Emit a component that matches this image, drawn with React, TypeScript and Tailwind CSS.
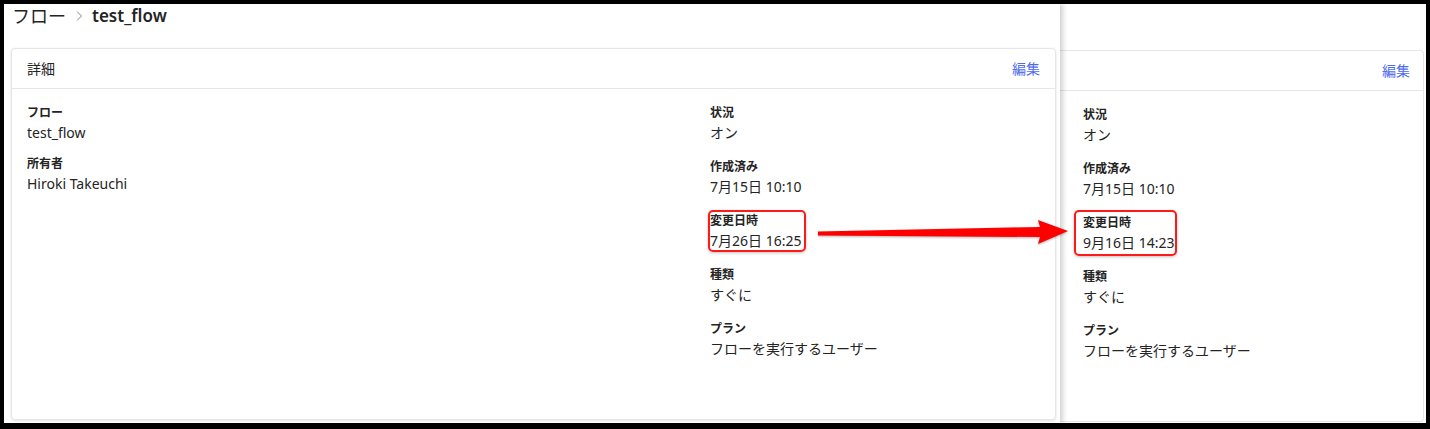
const font = "font-['Noto_Sans','Noto_Sans_CJK_JP',sans-serif]";

type Item = { label: string; value: string; mark?: boolean };

const leftItems: Item[] = [
  { label: 'フロー', value: 'test_flow' },
  { label: '所有者', value: 'Hiroki Takeuchi' },
];

function Field({ item, wide }: { item: Item; wide?: boolean }) {
  return (
    <div className="relative">
      {item.mark && (
        <div
          className={`absolute rounded-[5px] border-2 border-[#ff1a1a] shadow-[0_1px_3px_rgba(0,0,0,0.25)] ${
            wide ? '-left-[9px] -top-[4px] w-[103px] h-[46px]' : '-left-[2px] -top-[2px] w-[98px] h-[42px]'
          }`}
        />
      )}
      <div className="text-[12px] leading-[18px] font-semibold text-[#242424]">{item.label}</div>
      <div className="text-[14px] leading-[21px] text-[#242424]">{item.value}</div>
    </div>
  );
}

function rightItems(changed: string): Item[] {
  return [
    { label: '状況', value: 'オン' },
    { label: '作成済み', value: '7月15日 10:10' },
    { label: '変更日時', value: changed, mark: true },
    { label: '種類', value: 'すぐに' },
    { label: 'プラン', value: 'フローを実行するユーザー' },
  ];
}

export default function App() {
  return (
    <div className={`relative w-[1430px] h-[429px] bg-black p-[4px] pb-[6px] flex ${font}`}>
      {/* before */}
      <div className="w-[1056px] h-full bg-white relative z-10 shadow-[3px_0_5px_rgba(0,0,0,0.18)]">
        <div className="h-[24px] pl-[8px] flex items-center text-[18px] text-[#242424]">
          <span>フロー</span>
          <svg width="10" height="12" viewBox="0 0 10 12" className="mx-[8px]">
            <path d="M3 1.5 L7.5 6 L3 10.5" fill="none" stroke="#8a8886" strokeWidth="1" />
          </svg>
          <span className="font-semibold text-[17px]">test_flow</span>
        </div>
        <div className="mt-[20px] ml-[7px] w-[1045px] h-[372px] rounded-[4px] border border-[#e6e6e6] shadow-[0_1px_3px_rgba(0,0,0,0.12)] bg-white">
          <div className="h-[40px] px-[15px] flex items-center justify-between border-b border-[#e6e6e6]">
            <span className="text-[14px] text-[#242424]">詳細</span>
            <span className="text-[14px] text-[#4f6bed]">編集</span>
          </div>
          <div className="pt-[15px] pl-[15px] flex">
            <div className="w-[683px] flex flex-col gap-[12px]">
              {leftItems.map(it => <Field key={it.label} item={it} />)}
            </div>
            <div className="flex flex-col gap-[15px]">
              {rightItems('7月26日 16:25').map(it => <Field key={it.label} item={it} />)}
            </div>
          </div>
        </div>
      </div>

      {/* after */}
      <div className="flex-1 h-full bg-white">
        <div className="mt-[46px] mr-[2px] h-[372px] rounded-r-[4px] border border-l-0 border-[#e6e6e6] bg-white">
          <div className="h-[40px] pl-[23px] pr-[13px] flex items-center justify-end border-b border-[#e6e6e6]">
            <span className="text-[14px] text-[#4f6bed]">編集</span>
          </div>
          <div className="pt-[15px] pl-[23px] flex flex-col gap-[15px]">
            {rightItems('9月16日 14:23').map(it => <Field key={it.label} item={it} wide />)}
          </div>
        </div>
      </div>

      {/* arrow */}
      <svg className="absolute left-0 top-0 z-20 pointer-events-none" width="1430" height="429">
        <polygon
          points="818,231.5 1040,227 1038,220 1068,231 1038,244 1040,237 818,235.5"
          fill="#ff0000"
          style={{ filter: 'drop-shadow(0 1px 1px rgba(0,0,0,0.3))' }}
        />
      </svg>
    </div>
  );
}
